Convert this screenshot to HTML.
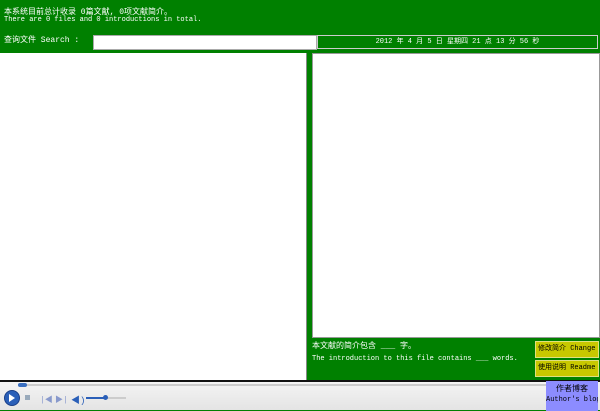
<!DOCTYPE html>
<html><head><meta charset="utf-8"><style>
body{margin:0;width:600px;height:410px;overflow:hidden;background:#008000;font-family:"Liberation Mono","Noto Sans CJK SC",monospace;color:#fff;position:relative;font-size:7px}
.a{position:absolute;white-space:nowrap}
.btn{position:absolute;background:#c8c800;border:1px solid #e0e080;color:#000;font-size:7px;line-height:15px;padding-left:2px;white-space:nowrap;overflow:hidden}
</style></head><body>
<div class="a" style="left:4px;top:6px;font-size:8px">本系统目前总计收录 0篇文献, 0项文献简介。</div>
<div class="a" style="left:4px;top:16px">There are 0 files and  0 introductions in total.</div>
<div class="a" style="left:4px;top:34px;font-size:8px">查询文件 Search :</div>
<div class="a" style="left:93px;top:35px;width:222px;height:13px;background:#fff;border:1px solid #aaa"></div>
<div class="a" style="left:317px;top:35px;width:279px;height:12px;border:1px solid #ccc;background:#008000;text-align:center;line-height:12px;font-size:7px">2012 年 4 月 5 日 星期四 21 点 13 分 56 秒</div>
<div class="a" style="left:0;top:53px;width:306px;height:327px;background:#fff;border-right:1px solid #888"></div>
<div class="a" style="left:312px;top:53px;width:286px;height:283px;background:#fff;border:1px solid #999"></div>
<div class="a" style="left:312px;top:340px;font-size:8px">本文献的简介包含 ___ 字。</div>
<div class="a" style="left:312px;top:355px">The introduction to this file contains ___ words.</div>
<div class="btn" style="left:535px;top:341px;width:60px;height:15px">修改简介 Change</div>
<div class="btn" style="left:535px;top:360px;width:60px;height:15px">使用说明 Readme</div>
<div class="a" style="left:0;top:380px;width:600px;height:2px;background:#111"></div>
<div class="a" style="left:0;top:382px;width:600px;height:28px;background:linear-gradient(#f4f4f4,#e4e4e4)"></div>
<div class="a" style="left:18px;top:384px;width:560px;height:2px;background:#ccc"></div>
<div class="a" style="left:18px;top:383px;width:9px;height:4px;background:#3a6fc0;border-radius:2px"></div>
<div class="a" style="left:4px;top:390px;width:14px;height:14px;border-radius:50%;background:#2a5fb8;border:1px solid #1a3f88"></div>
<div class="a" style="left:9px;top:394px;width:0;height:0;border-left:6px solid #fff;border-top:4px solid transparent;border-bottom:4px solid transparent"></div>
<div class="a" style="left:25px;top:395px;width:5px;height:5px;background:#9ab"></div>
<div class="a" style="left:40px;top:394px;color:#89c;font-size:8px">|◀</div>
<div class="a" style="left:55px;top:394px;color:#89c;font-size:8px">▶|</div>
<div class="a" style="left:71px;top:393px;color:#2a5fb8;font-size:9px">◀)</div>
<div class="a" style="left:86px;top:397px;width:40px;height:2px;background:#ccc"></div>
<div class="a" style="left:86px;top:397px;width:20px;height:2px;background:#2a5fb8"></div>
<div class="a" style="left:103px;top:395px;width:5px;height:5px;border-radius:50%;background:#2a5fb8"></div>
<div class="a" style="left:546px;top:381px;width:52px;height:26px;background:#8c8cff;color:#000;text-align:center;font-size:7px;line-height:10px;padding-top:4px;overflow:hidden"><span style="font-size:8px">作者博客</span><br>Author's blog</div>
</body></html>
